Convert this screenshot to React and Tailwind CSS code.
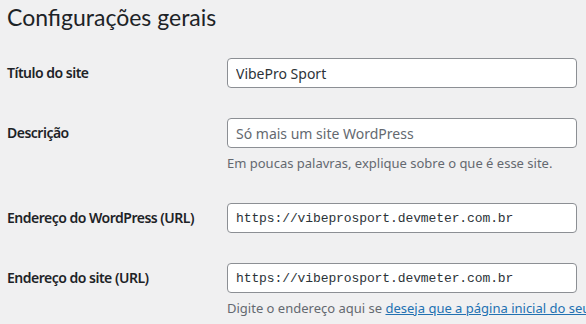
const rows = [
  { label: "Título do site", value: "VibePro Sport" },
  {
    label: "Descrição",
    placeholder: "Só mais um site WordPress",
    desc: "Em poucas palavras, explique sobre o que é esse site.",
  },
  { label: "Endereço do WordPress (URL)", value: "https://vibeprosport.devmeter.com.br", mono: true },
  { label: "Endereço do site (URL)", value: "https://vibeprosport.devmeter.com.br", mono: true, link: true },
]

function App() {
  return (
    <div className="w-[586px] h-[324px] overflow-hidden bg-[#f0f0f1] text-[#1d2327] pl-[7px] font-['Noto_Sans',sans-serif]">
      <h1 className="pt-[2px] mb-[11px] text-[23px] leading-[30px] font-normal font-['Lato',sans-serif]">Configurações gerais</h1>

      {rows.map((row) => (
        <div key={row.label} className="flex py-[15px]">
          <div className="w-[220px] shrink-0 h-[30px] leading-[30px] text-[14px] font-semibold tracking-[-0.5px]">{row.label}</div>
          <div className="flex flex-col min-w-0">
            <input
              type="text"
              readOnly
              defaultValue={row.value}
              placeholder={row.placeholder}
              className={
                row.mono
                  ? "w-[350px] h-[30px] px-[8px] bg-white border border-[#8c8f94] rounded-[4px] text-[13px] tracking-[-0.1px] text-[#2c3338] font-['Liberation_Mono',monospace] outline-none"
                  : "w-[350px] h-[30px] px-[8px] bg-white border border-[#8c8f94] rounded-[4px] text-[14px] text-[#2c3338] placeholder:text-[#646970] outline-none"
              }
            />
            {row.desc && <p className="mt-[5px] leading-[20px] text-[13px] text-[#646970] whitespace-nowrap">{row.desc}</p>}
            {row.link && (
              <p className="mt-[5px] leading-[20px] text-[13px] text-[#646970] whitespace-nowrap">
                Digite o endereço aqui se{" "}
                <a href="#" className="text-[#2271b1] underline">
                  deseja que a página inicial do seu site seja diferente do diretório de instalação do WordPress
                </a>
                .
              </p>
            )}
          </div>
        </div>
      ))}
    </div>
  )
}

export default App
